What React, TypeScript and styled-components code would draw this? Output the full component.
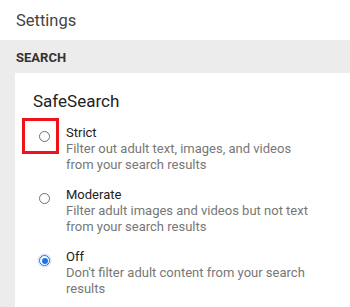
import React from "react";
import styled, { createGlobalStyle } from "styled-components";

const Global = createGlobalStyle`
  html, body { margin: 0; padding: 0; background: #ececec; }
  body { font-family: Roboto, "Noto Sans", Arial, sans-serif; -webkit-font-smoothing: antialiased; }
`;

const Page = styled.div`
  width: 350px;
  height: 307px;
  overflow: hidden;
  background: #ececec;
  display: flex;
  flex-direction: column;
`;

const Header = styled.div`
  height: 40px;
  background: #fff;
  display: flex;
  align-items: center;
  padding-left: 16px;
  font-size: 16.5px;
  color: #444;
`;

const SectionLabel = styled.div`
  height: 33px;
  display: flex;
  align-items: center;
  padding-left: 16px;
  padding-top: 1px;
  box-sizing: border-box;
  font-size: 13px;
  font-weight: 700;
  color: #333;
`;

const Card = styled.div`
  margin-left: 15px;
  flex: 1;
  background: #fff;
  padding: 18px 0 0 18px;
  display: flex;
  flex-direction: column;
`;

const CardTitle = styled.div`
  font-size: 17px;
  line-height: 20px;
  color: #222;
  margin-bottom: 14px;
`;

const Options = styled.div`
  display: flex;
  flex-direction: column;
  gap: 15px;
`;

const Option = styled.div`
  position: relative;
  display: grid;
  grid-template-columns: 33px 1fr;
`;

const RadioCell = styled.div`
  padding-left: 6px;
  padding-top: 6px;
`;

const Ring = styled.div<{ $on: boolean }>`
  width: 11px;
  height: 11px;
  box-sizing: border-box;
  border-radius: 50%;
  border: 1.3px solid ${(p) => (p.$on ? "#1a73e8" : "#6f6f6f")};
  display: flex;
  align-items: center;
  justify-content: center;
  box-shadow: ${(p) => (p.$on ? "0 0 0 1.5px rgba(26,115,232,0.18)" : "none")};
`;

const Dot = styled.div`
  width: 6px;
  height: 6px;
  border-radius: 50%;
  background: #1a73e8;
`;

const Text = styled.div`
  display: flex;
  flex-direction: column;
  padding-right: 30px;
`;

const OptionTitle = styled.div`
  font-size: 13px;
  line-height: 16px;
  color: #222;
`;

const OptionDesc = styled.div`
  font-size: 13px;
  line-height: 15.5px;
  color: #777;
`;

const Highlight = styled.div`
  position: absolute;
  left: -11px;
  top: -7px;
  width: 37px;
  height: 36px;
  box-sizing: border-box;
  border: 3px solid #f0121b;
`;

const options = [
  { title: "Strict", desc: "Filter out adult text, images, and videos from your search results", on: false, mark: true },
  { title: "Moderate", desc: "Filter adult images and videos but not text from your search results", on: false, mark: false },
  { title: "Off", desc: "Don't filter adult content from your search results", on: true, mark: false },
];

export default function App() {
  return (
    <>
      <Global />
      <Page>
        <Header>Settings</Header>
        <SectionLabel>SEARCH</SectionLabel>
        <Card>
          <CardTitle>SafeSearch</CardTitle>
          <Options>
            {options.map((o) => (
              <Option key={o.title}>
                {o.mark && <Highlight />}
                <RadioCell>
                  <Ring $on={o.on}>{o.on && <Dot />}</Ring>
                </RadioCell>
                <Text>
                  <OptionTitle>{o.title}</OptionTitle>
                  <OptionDesc>{o.desc}</OptionDesc>
                </Text>
              </Option>
            ))}
          </Options>
        </Card>
      </Page>
    </>
  );
}
